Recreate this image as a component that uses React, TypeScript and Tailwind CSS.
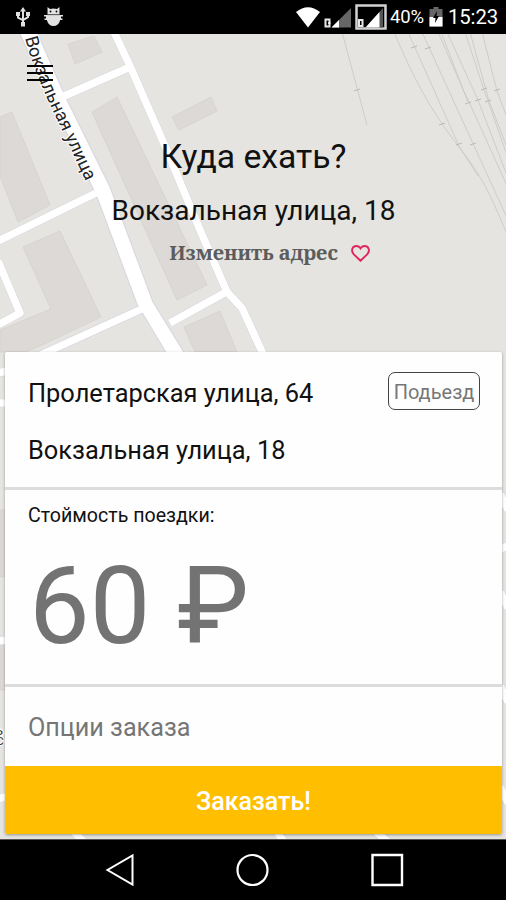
import React from "react";

const buildings = [
  "68,44 94,36 102,52 75,64",
  "92,112 117,97 207,285 177,300",
  "172,117 211,97 217,111 179,130",
  "0,117 12,112 50,205 18,222 0,176",
  "23,247 60,231 101,317 42,345 26,352 0,352 0,330 51,309",
  "184,327 220,311 237,352 195,352",
  "0,510 6,510 6,577 0,577",
  "0,640 6,640 6,690 0,690",
];

const roads = [
  "M114 32 L130 66 L165 146 L200 230 L227 292 L242 308 L264 356",
  "M62 97 L130 67",
  "M-2 241 L96 193",
  "M36 357 L144 308",
  "M-2 261 L20 313 L-2 325",
  "M170 323 L228 291",
  "M-2 373 L8 371",
  "M-2 403 L8 403",
  "M-2 641 L8 640",
  "M-2 799 L8 796",
  "M500 494 L508 510",
  "M500 549 L508 546",
  "M500 592 L508 608",
  "M500 686 L508 702",
  "M500 787 L508 803",
  "M72 830 L84 842",
  "M276 830 L284 842",
  "M374 830 L388 842",
];

const rails = [
  "M342 32 L367 125",
  "M394 32 C412 75 430 110 459 147 S493 203 508 236",
  "M408 32 L459 146 L478 176",
  "M422 32 L508 220",
  "M438 32 L465 94 L470 104 L508 188",
  "M441 32 L468 102",
  "M447 32 L478 100 L508 178",
  "M465 32 L484 90 L508 158",
  "M470 32 L489 101 L508 150",
  "M482 32 L497 91 L508 120",
];

const ties = [
  [357, 90], [414, 47], [428, 48], [442, 124], [459, 144], [473, 144],
  [468, 103], [478, 100], [484, 89], [488, 101], [497, 90],
];

function MapCanvas() {
  return (
    <svg className="absolute inset-0 h-full w-full" viewBox="0 34 506 805" aria-hidden="true">
      <rect x="0" y="34" width="506" height="805" fill="#e5e4e0" />
      <g fill="#dcd9d6" stroke="#d3d0cd" strokeWidth="0.7">
        {buildings.map((p) => (
          <polygon key={p} points={p} />
        ))}
      </g>
      <g fill="none" stroke="#d9d9e1" strokeWidth="8.6" strokeLinejoin="round">
        {roads.map((d) => (
          <path key={d} d={d} />
        ))}
      </g>
      <path
        d="M19 32 L97 197 L137 304 L167 354 H185 L153 302 L110 187 L65 96 L37 32 Z"
        fill="#fff"
        stroke="#d9d9e1"
        strokeWidth="1.2"
      />
      <g fill="none" stroke="#fff" strokeWidth="7.4" strokeLinejoin="round">
        {roads.map((d) => (
          <path key={d} d={d} />
        ))}
      </g>
      <path d="M20 32 L98 197 L138 304 L168 354 H184 L152 302 L109 187 L64 96 L36 32 Z" fill="#fff" />
      <g fill="none" stroke="#c9c9c9" strokeWidth="0.9">
        {rails.map((d) => (
          <path key={d} d={d} />
        ))}
        {ties.map(([x, y]) => (
          <path key={x + "-" + y} d={`M${x - 3} ${y + 1} L${x + 3} ${y - 1}`} stroke="#b4b4b4" />
        ))}
      </g>
      <path id="street" d="M25 38 Q33 68 47 98 L91 192" fill="none" />
      <text fontFamily="Roboto, sans-serif" fontSize="18" fill="#222" stroke="#fff" strokeWidth="2" paintOrder="stroke">
        <textPath href="#street" textLength="156">Вокзальная улица</textPath>
      </text>
      <text x="-5" y="735" fontFamily="Roboto, sans-serif" fontSize="15" fill="#444" stroke="#fff" strokeWidth="3" paintOrder="stroke">ь</text>
      <text x="-4" y="745" fontFamily="Roboto, sans-serif" fontSize="15" fill="#444" stroke="#fff" strokeWidth="2" paintOrder="stroke">с</text>
    </svg>
  );
}

function StatusBar() {
  return (
    <header className="flex h-[34px] shrink-0 items-center bg-black pl-[15px] pr-[8px] text-white">
      <svg className="h-5 w-4" viewBox="0 0 16 20" fill="none" stroke="#e0e0e0" strokeWidth="2">
        <path d="M8 3v14M3 7.500v3.200l5 2.500M13 7v3.200l-5 3" />
        <path d="M8 0l3 4.500h-6z M6 15h4v4.500h-4z M1 5h4v4h-4z M11 5h4v4h-4z" fill="#e0e0e0" stroke="none" />
      </svg>
      <svg className="ml-[13px] h-5 w-[19px]" viewBox="0 0 19 20" fill="#e2e2e2">
        <path d="M3.500 0l2.500 2q3.500-1 7 0l2.500-2v7.500h-12z" />
        <path d="M0 8h19v1.500h-2v2h1.500v1.500h-2.300q-1.700 6-6.700 6t-6.700-6h-2.300v-1.500h1.500v-2h-2z" />
        <circle cx="6.500" cy="4.500" r="0.900" fill="#000" />
        <circle cx="12.500" cy="4.500" r="0.900" fill="#000" />
        <path d="M3.500 7.700h12" stroke="#555" strokeWidth=".8" />
      </svg>
      <svg className="ml-auto h-[22px] w-[26px]" viewBox="0 0 26 22" fill="#fff">
        <path d="M1 6Q13-3.500 25 6L13 21.500Z" />
      </svg>
      <svg className="ml-[3px] h-[26px] w-7" viewBox="0 0 28 26">
        <path d="M27 4v19.500H7.500z" fill="#666" />
        <path d="M15 16v7.500H7.500z" fill="#fff" />
        <path d="M1.500 15.500h4v7h-4z" fill="none" stroke="#e8e8e8" strokeWidth="2" />
        <path d="M4 19h2.500" stroke="#fff" strokeWidth="1.500" />
      </svg>
      <svg className="ml-[3px] h-[26px] w-8" viewBox="0 0 32 26">
        <path d="M1.500 1.500h29v23h-29z" fill="none" stroke="#d2d2d2" strokeWidth="2.500" />
        <path d="M28 4v19.500H10.500z" fill="#555" />
        <path d="M24.500 8v15.500H10.500z" fill="#fff" />
        <path d="M4 16h3.500v6h-3.500z" fill="none" stroke="#e8e8e8" strokeWidth="2" />
      </svg>
      <span className="ml-[3px] w-[36px] whitespace-nowrap text-[18.500px] leading-[34px] tracking-[-0.1px]">40%</span>
      <svg className="ml-[3px] h-5 w-[14px]" viewBox="0 0 14 20">
        <path d="M4.500 0h5v2h4v17.500h-13v-17.500h4z" fill="#666" />
        <path d="M.500 10h13v9.500h-13z" fill="#fff" />
        <path d="M8 4l-4 7h2.500l-.5 5 4-7h-2.500z" fill="#000" />
      </svg>
      <span className="ml-[5px] whitespace-nowrap text-[20.300px] leading-[34px] tracking-[-0.1px]">15:23</span>
    </header>
  );
}

function NavBar() {
  return (
    <nav className="flex h-[61px] shrink-0 items-center justify-between border-t border-[#555] bg-black pl-[104px] pr-[102px]">
      <svg className="h-[34px] w-[32px]" viewBox="0 0 32 34" fill="none" stroke="#fff" strokeWidth="2">
        <path d="M28.500 2.500v29L3.500 17z" />
      </svg>
      <svg className="h-[34px] w-[34px]" viewBox="0 0 34 34" fill="none" stroke="#fff" strokeWidth="2.200">
        <circle cx="16.500" cy="17" r="15" />
      </svg>
      <svg className="h-[34px] w-[34px]" viewBox="0 0 34 34" fill="none" stroke="#fff" strokeWidth="2.400">
        <path d="M2.500 2h29.500v30h-29.500z" />
      </svg>
    </nav>
  );
}

export default function App() {
  return (
    <div className="flex h-[900px] w-[506px] flex-col overflow-hidden bg-black font-[Roboto,'Noto_Sans',sans-serif] text-[#111]">
      <StatusBar />
      <main className="relative h-[805px] shrink-0">
        <MapCanvas />
        <button className="absolute left-[27px] top-[31px] flex w-[26px] flex-col gap-[5px]" aria-label="Меню">
          <span className="h-[2px] w-full bg-black" />
          <span className="h-[2px] w-full bg-black" />
          <span className="h-[2px] w-full bg-black" />
        </button>
        <div className="relative flex h-full flex-col pb-[5px] pl-[5px] pr-[4px]">
          <section className="flex h-[318px] flex-col items-center pt-[103px]">
            <h1 className="text-[33.700px] leading-[40px]">Куда ехать?</h1>
            <p className="mt-[14px] whitespace-nowrap text-[28px] leading-[40px]">Вокзальная улица, 18</p>
            <button className="mt-[8px] flex h-7 items-center gap-[13px] pl-[34px] pr-[2px] text-[#5c5c5c]">
              <span className="whitespace-nowrap font-['Noto_Serif','DejaVu_Serif_Condensed','DejaVu_Serif',serif] text-[20px] font-bold leading-7">Изменить адрес</span>
              <svg className="h-[17px] w-[19px]" viewBox="0 0 20 18" fill="none" stroke="#e0245e" strokeWidth="2">
                <path d="M10 16.700L3 10C-1 5.500 2 1 5.500 1Q8.500 1 10 3.600Q11.500 1 14.500 1C18 1 21 5.500 17 10Z" />
              </svg>
            </button>
          </section>
          <section className="flex h-[482px] flex-col rounded-[2px] bg-[#fefefe] shadow-[0_1px_3px_rgba(0,0,0,0.35)]">
            <div className="flex h-[138px] justify-between border-b-[3px] border-[#dcdcdc] pl-[23px] pr-[22px] pt-5">
              <div className="flex flex-col gap-[17px] whitespace-nowrap pt-[1px] text-[25.400px] leading-10">
                <p>Пролетарская улица, 64</p>
                <p>Вокзальная улица, 18</p>
              </div>
              <button className="flex h-[38px] w-[92px] items-center justify-center rounded-[7px] border-[1.500px] border-[#444] pt-[2px] text-[20px] text-[#777]">Подьезд</button>
            </div>
            <div className="h-[197px] border-b-[3px] border-[#dcdcdc] pl-[23px] pt-[11px]">
              <p className="whitespace-nowrap text-[19.600px] leading-[30px]">Стоймость поездки:</p>
              <p className="mt-[18px] whitespace-nowrap pl-[1px] text-[108px] leading-[114px] text-[#737373]">60 ₽</p>
            </div>
            <div className="flex h-[79px] items-center pl-[23px] pt-[3px] text-[25.200px] text-[#757575]">Опции заказа</div>
            <button className="flex h-[68px] items-center justify-center rounded-b-[2px] bg-[#ffbf00] pt-[4px] text-[25px] font-medium text-white">Заказать!</button>
          </section>
        </div>
      </main>
      <NavBar />
    </div>
  );
}
